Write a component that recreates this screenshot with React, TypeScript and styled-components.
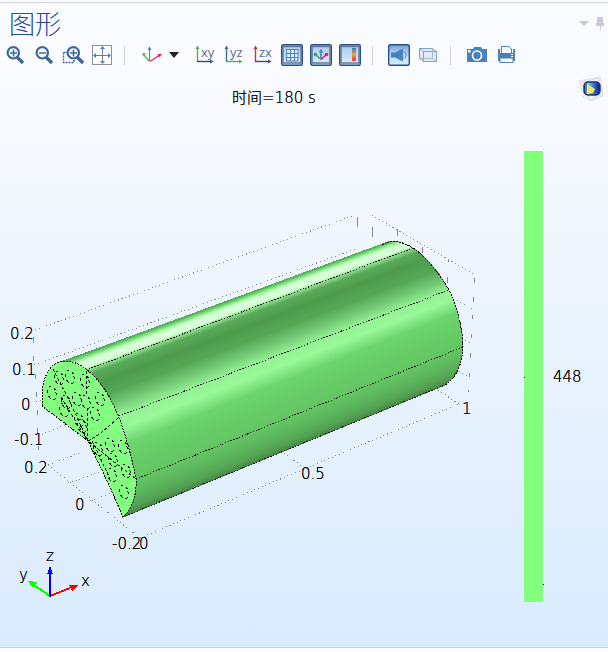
import React from "react";
import styled, { createGlobalStyle, css } from "styled-components";

const GlobalStyle = createGlobalStyle`
  * { box-sizing: border-box; }
  body { margin: 0; background: #fafbff; }
`;

const Page = styled.main`
  display: flex;
  flex-direction: column;
  min-height: 100vh;
  padding: 2px 0 4px;
  background: #fafbff;
  font-family: "DejaVu Sans", "Noto Sans CJK SC", sans-serif;
  color: #111;
`;

const Panel = styled.section`
  flex: 1;
  display: flex;
  flex-direction: column;
  border-top: 1px solid #d0d3dc;
  border-bottom: 1px solid #cdd2da;
`;

const Header = styled.header`
  display: flex;
  justify-content: space-between;
  align-items: center;
  height: 40px;
  padding-left: 9px;
`;

const Title = styled.h1`
  margin: 0;
  font: 100 26px/40px "Noto Sans CJK SC", sans-serif;
  color: #1d4796;
  text-shadow: 0 0 0 #1d4796;
`;

const HeaderActions = styled.div`
  display: flex;
`;

const bareButton = css`
  display: flex;
  align-items: center;
  justify-content: center;
  padding: 0;
  border: 0;
  background: none;
  cursor: pointer;
`;

const HeaderButton = styled.button`
  ${bareButton}
  width: 16px;
  height: 16px;
`;

const Toolbar = styled.div`
  display: flex;
  align-items: center;
  height: 24px;
`;

const ToolButton = styled.button<{ $narrow?: boolean }>`
  ${bareButton}
  flex: none;
  width: ${(p) => (p.$narrow ? 18 : 29)}px;
  height: 24px;
`;

const Divider = styled.span`
  flex: none;
  width: 1px;
  height: 19px;
  margin: 0 11px 0 8px;
  background: #cfd2d9;
`;

const Gap = styled.span`
  width: 7px;
`;

const Plot = styled.div`
  flex: 1;
  display: flex;
  flex-direction: column;
  padding-top: 9px;
  background: linear-gradient(#fafbff, #d9ebfd);
`;

const PlotHeading = styled.div`
  display: grid;
  grid-template-columns: 1fr 60px;
  align-items: center;
  height: 33px;
`;

const TimeLabel = styled.h2`
  margin: 0;
  padding-top: 9px;
  text-align: center;
  font: 200 15px/24px "DejaVu Sans Light", "DejaVu Sans", "Noto Sans CJK SC", sans-serif;
  text-shadow: 0 0 0 #000;
`;

const Logo = styled.div`
  display: flex;
  justify-content: flex-end;
  padding-right: 4px;
  padding-bottom: 8px;
`;

const PlotBody = styled.div`
  flex: 1;
  display: grid;
  grid-template-columns: 1fr 84px;
`;

const Scene = styled.svg`
  display: block;
  width: 100%;
  height: 100%;
`;

const AxisText = styled.text`
  font: 200 15px "DejaVu Sans Light", "DejaVu Sans", sans-serif;
  fill: #000;
  text-shadow: 0 0 0 #000;
`;

const Legend = styled.div`
  display: flex;
  align-items: stretch;
  gap: 10px;
  padding: 42px 0 45px;
`;

const ColorBar = styled.div`
  position: relative;
  width: 19px;
  background: #82ff7e;

  &::before,
  &::after {
    content: "";
    position: absolute;
    width: 1px;
    height: 1px;
    background: #000;
  }
  &::before {
    top: 50%;
    left: 0;
  }
  &::after {
    top: 96%;
    left: 100%;
  }
`;

const LegendValue = styled.span`
  align-self: center;
  font: 200 15px/18px "DejaVu Sans Light", "DejaVu Sans", sans-serif;
  color: #000;
  text-shadow: 0 0 0 #000;
`;

const BLUE = "#4a80bb";
const NAVY = "#3e6797";

const Icon = ({ children, size = 22 }: { children: React.ReactNode; size?: number }) => (
  <svg width={size} height={size} viewBox={`0 0 ${size} ${size}`} fill="none" aria-hidden>
    {children}
  </svg>
);

const Lens = ({ plus, x = 0 }: { plus?: boolean; x?: number }) => (
  <g transform={`translate(${x} 0)`}>
    <path d="M12.5 12.5L19 19" stroke={NAVY} strokeWidth="3.4" />
    <circle cx="9.3" cy="8.8" r="5.7" stroke={NAVY} strokeWidth="2.2" fill="#fafbff" />
    <path d={plus ? "M6 9H13M9.5 5.5V12.5" : "M6 9H13"} stroke={NAVY} strokeWidth="1.5" />
  </g>
);

const ZoomBoxIcon = () => (
  <Icon>
    <path d="M1.5 8.5H9M1.5 8.5V18.5H12V12" stroke={NAVY} strokeWidth="1.3" strokeDasharray="2 1" />
    <Lens plus x={2} />
  </Icon>
);

const ExtentsIcon = () => (
  <Icon>
    <rect x="1.5" y="1.5" width="19" height="19" stroke="#8d9095" fill="#fff" />
    <path d="M11.5 4V18M4 11.5H18" stroke="#777d86" />
    <path d="M9 5L11.5 2L14 5ZM9 17L11.5 20L14 17ZM5 9L2 11.5L5 14ZM17 9L20 11.5L17 14Z" fill={BLUE} />
  </Icon>
);

const AxesIcon = () => (
  <Icon>
    <path d="M9.5 17V5" stroke={BLUE} />
    <path d="M7.5 6L9.5 2.5L11.5 6Z" fill={BLUE} />
    <path d="M9.5 17.5L4 11" stroke="#5cae4c" strokeWidth="1.2" />
    <path d="M2 9L6 9.5L3.5 12.5Z" fill="#5cae4c" />
    <path d="M10 17.5L19 11.5" stroke="#dc2266" strokeWidth="1.2" />
    <path d="M22 10L17.5 10L19.5 13.5Z" fill="#dc2266" />
  </Icon>
);

const PlaneText = styled.text`
  font: 13px "Open Sans", "Noto Sans", sans-serif;
  fill: #5b7089;
`;

const PlaneIcon = ({ label, up, across }: { label: string; up: string; across: string }) => (
  <Icon>
    <path d="M3.5 18V4" stroke={up} strokeWidth="1.4" />
    <path d="M1.5 5L3.5 1.5L5.5 5Z" fill={up} />
    <path d="M3 17.5H17" stroke={across} strokeWidth="1.4" />
    <path d="M16 15.5L19.5 17.5L16 19.5Z" fill={across} />
    <PlaneText x="7" y="13">{label}</PlaneText>
  </Icon>
);

const Pressed = ({ children, framed }: { children: React.ReactNode; framed?: boolean }) => {
  const id = framed ? "pressed-framed" : "pressed";
  return (
    <Icon>
      <defs>
        <linearGradient id={id} x1="0" y1="0" x2="0" y2="1">
          <stop offset="0" stopColor={framed ? "#a9c9ee" : "#6e9dd6"} />
          <stop offset=".5" stopColor="#bfdcf8" />
          <stop offset="1" stopColor="#d3edff" />
        </linearGradient>
      </defs>
      <rect x=".7" y=".7" width="20.6" height="20.6" rx="1.5" fill={`url(#${id})`} stroke="#234f98" strokeWidth="1.4" />
      {framed && <rect x="2" y="2.5" width="18" height="16.5" stroke="#69717c" strokeWidth="1.4" />}
      {children}
    </Icon>
  );
};

const GridIcon = () => (
  <Pressed framed>
    <rect x="5" y="5" width="12" height="12" fill="#dbeeff" />
    <path d="M5.5 5V17M9.5 5V17M13.5 5V17M17 5V17M5 5.500H17M5 9.500H17M5 13.500H17M5 17H17" stroke={BLUE} />
  </Pressed>
);

const AxisToggleIcon = () => (
  <Pressed framed>
    <path d="M11 15V7" stroke={BLUE} strokeWidth="1.6" />
    <path d="M8.5 8.5L11 5L13.5 8.5Z" fill={BLUE} />
    <path d="M11 15.5L6 11" stroke="#35a94b" strokeWidth="1.4" />
    <path d="M11 15.5L16 11" stroke="#dc2266" strokeWidth="1.4" />
    <circle cx="5.5" cy="10.5" r="1.8" fill="#35a94b" />
    <circle cx="16.5" cy="10.5" r="1.8" fill="#dc2266" />
  </Pressed>
);

const LegendIcon = () => (
  <Pressed framed>
    <defs>
      <linearGradient id="legend" x1="0" y1="0" x2="0" y2="1">
        <stop offset="0" stopColor="#3f74b8" />
        <stop offset=".5" stopColor="#eda63b" />
        <stop offset="1" stopColor="#dd3153" />
      </linearGradient>
    </defs>
    <rect x="13" y="4" width="4" height="13" fill="url(#legend)" />
  </Pressed>
);

const LightIcon = () => (
  <Pressed>
    <path d="M3 8.5H7L15 4.500V17.500L7 13.500H3Z" fill={BLUE} />
    <path d="M15.5 7.5C19 8.5 19 13.5 15.5 14.5" stroke={BLUE} />
  </Pressed>
);

const BoxIcon = () => (
  <Icon>
    <path d="M3 4H15L19 7.5V17.5H7L3 13.5Z" fill="#e4eaf1" />
    <path d="M2.5 4.5H15.5L19.5 7.5V17.5H6.5L2.5 14.5ZM2.5 4.5L6.5 7.5H19.5M6.5 7.5V17.5" stroke="#7fa3c9" />
    <path d="M15.5 4.5V14.5H2.5M15.5 14.5L19.5 17.5" stroke="#a5b6c8" />
  </Icon>
);

const CameraIcon = () => (
  <Icon>
    <path d="M1 5H7L8 3H15L16 5H21V18H1Z" fill={BLUE} />
    <circle cx="11" cy="11.5" r="4.5" stroke="#fff" strokeWidth="1.6" />
    <rect x="2" y="6" width="2.5" height="2.5" fill="#fff" />
  </Icon>
);

const PrinterIcon = () => (
  <Icon>
    <path d="M6.5 9.5V2.5H14L16.500 5V9.500" fill="#fff" stroke={BLUE} />
    <path d="M3 5H5V9H18V5H20V17H18V14H5V17H3ZM3 9H20V14H3Z" fill={BLUE} />
    <rect x="5" y="14" width="13" height="4.500" fill="#fff" stroke={BLUE} />
    <path d="M16 10.5H18M16 12.5H18" stroke="#fff" />
  </Icon>
);

const ComsolIcon = () => (
  <Icon size={26}>
    <defs>
      <linearGradient id="flame">
        <stop offset="0" stopColor="#18359c" />
        <stop offset=".25" stopColor="#8fd0c0" />
        <stop offset=".6" stopColor="#2b7fd6" />
        <stop offset="1" stopColor="#0c1a76" />
      </linearGradient>
    </defs>
    <path d="M1 5L22 1L25 20L13 25L5 21Z" fill="#f1f1f1" stroke="#e2e2e1" />
    <path d="M3 7L20 2L25 18L12 24Z" stroke="#dededc" />
    <rect x="6" y="6" width="16" height="13" rx="4" fill="url(#flame)" stroke="#18318d" strokeWidth="1.4" />
    <path d="M9 8L17 13L15 17L9 18Z" fill="#f3e662" />
  </Icon>
);

type Rib = [number, number, number, number, number, number, number];

// Front x/y, back x/y and the surface colour along each generator of the shell.
const ribs: Rib[] = [
  [58, 363, 382, 245, 70, 150, 70],
  [64, 361, 388, 242, 78, 165, 78],
  [68, 361, 394, 241, 88, 185, 88],
  [72, 362, 399, 241, 125, 222, 125],
  [75.5, 363.5, 402.5, 242.5, 185, 252, 185],
  [79, 365, 406, 244, 218, 255, 218],
  [84, 369, 411, 247, 212, 254, 212],
  [86, 370, 413, 248, 150, 228, 150],
  [91, 374, 418, 252, 87, 170, 87],
  [99, 383, 426, 259, 78, 155, 78],
  [107, 394, 436, 270, 85, 167, 85],
  [114, 406, 444, 282, 120, 207, 120],
  [119, 416, 449, 290, 148, 242, 148],
  [123, 427, 453, 299, 152, 249, 152],
  [128, 443, 457, 312, 110, 212, 110],
  [132, 460, 461, 330, 102, 204, 102],
  [136, 479, 463, 347, 99, 197, 99],
  [135, 495, 460, 363, 91, 180, 91],
  [130, 508, 455, 375, 82, 161, 82],
  [123, 517, 445, 385, 70, 135, 70],
];

const STEPS = 8;
const strips = ribs.slice(1).flatMap((to, i) =>
  Array.from({ length: STEPS }, (_, k) => {
    const at = (t: number) => ribs[i].map((v, j) => v + (to[j] - v) * t);
    const a = at(k / STEPS);
    const b = at((k + 1) / STEPS);
    const fill = `rgb(${a.slice(4).map(Math.round).join(",")})`;
    return { fill, points: `${a[0]},${a[1]} ${a[2]},${a[3]} ${b[2]},${b[3]} ${b[0]},${b[1]}` };
  })
);

const FACE =
  "M42 406L42 393C43 381 46 373 52 366C59 360 69 360 78 364C92 371 105 387 114 406C123 425 131 453 136 479C137 495 132 509 123 517L110 487L88 441Z";

const tubes = [
  [59, 378], [70, 377], [85, 381], [52, 393], [77, 399], [100, 399], [86, 402],
  [64, 410], [95, 414], [66, 402], [79, 420], [110, 445], [123, 447], [113, 460],
  [126, 471], [112, 475], [124, 492], [98, 449], [82, 426],
];

const labels: [string, number, number][] = [
  ["0.2", 10, 339], ["0.1", 12, 375], ["0", 21, 410], ["-0.1", 14, 445],
  ["0.2", 24, 473], ["0", 75, 510], ["-0.2", 112, 549], ["0", 139, 549],
  ["0.5", 301, 479], ["1", 462, 414], ["z", 46, 561], ["y", 19, 580], ["x", 81, 586],
];

const GeometryScene = () => (
  <Scene viewBox="0 109 524 538" preserveAspectRatio="xMinYMin meet" role="img" aria-label="时间=180 s, 448">
    <g stroke="#858b93" fill="none" shapeRendering="crispEdges">
      <path
        strokeDasharray="1 3"
        d="M35 330L355 215M34 365L358 248M36 402L43 400M38 436L65 425M48 465L82 452M68 483L100 472M90 501L114 492M48 465L140 538M140 538L459 404M284 453L303 467M372 215L475 275M457 300L473 309M462 338L471 344M459 371L469 377M438 390L459 404"
      />
      <path d="M33 337V343M33 356V361M35 374V379M36 392V397M37 410V415M37 428V433M38 446V450M357 217V227M372 227V237M397 229V236M422 247V253M448 259V262M447 277V283M474 278V283M473 297V302M472 315V319M471 334V338M470 353V358M469 373V377M468 390V392" />
    </g>
    <g shapeRendering="crispEdges">
      {strips.map((s, i) => (
        <polygon key={i} points={s.points} fill={s.fill} stroke={s.fill} />
      ))}
      <path d={FACE} fill="#82ff7e" />
    </g>
    <g stroke="#000" fill="none" shapeRendering="crispEdges">
      <path d={FACE} strokeDasharray="2 1" />
      <path
        strokeDasharray="1.4 1.6"
        d="M86 370L413 248M119 416L449 290M136 479L463 347M123 517L445 385"
      />
      <path strokeDasharray="2 1" d="M382 245C390 240 400 240 413 248C426 256 439 273 449 290C457 306 463 330 463 347C462 364 457 377 445 385" />
      <path strokeDasharray="3 2" d="M53 369L68 398L88 441M86 371V395M87 408L88 441M118 418L100 434L88 441L113 461L136 479M61 397L88 441M92 441L110 478" />
      {tubes.map(([x, y], i) => (
        <ellipse key={i} cx={x} cy={y} rx="4" ry="7" strokeDasharray="3 3" transform={`rotate(-12 ${x} ${y})`} />
      ))}
    </g>
    <g shapeRendering="crispEdges" strokeWidth="2">
      <path d="M50 596L34 585" stroke="#0f0" />
      <path d="M28 581L37 582L33 588Z" fill="#0f0" />
      <path d="M50 596L70 588" stroke="#f00" />
      <path d="M78 585L69 585L72 591Z" fill="#f00" />
      <path d="M50 597V572" stroke="#00f" />
      <path d="M50 566L53 574H47Z" fill="#00f" />
    </g>
    {labels.map(([text, x, y]) => (
      <AxisText key={`${text}${x}`} x={x} y={y}>{text}</AxisText>
    ))}
  </Scene>
);

export default function App() {
  return (
    <>
      <GlobalStyle />
      <Page>
        <Panel>
          <Header>
            <Title>图形</Title>
            <HeaderActions>
              <HeaderButton aria-label="菜单">
                <svg width="10" height="5" viewBox="0 0 10 5"><path d="M0 0H10L5 5Z" fill="#c8ccd7" /></svg>
              </HeaderButton>
              <HeaderButton aria-label="固定">
                <svg width="10" height="13" viewBox="0 0 10 13"><path d="M2 0H8V6H9V9H6V13H5V9H1V6H2Z" fill="#c8ccd7" /></svg>
              </HeaderButton>
            </HeaderActions>
          </Header>
          <Toolbar role="toolbar" aria-label="图形">
            <ToolButton aria-label="放大"><Icon><Lens plus /></Icon></ToolButton>
            <ToolButton aria-label="缩小"><Icon><Lens /></Icon></ToolButton>
            <ToolButton aria-label="框选缩放"><ZoomBoxIcon /></ToolButton>
            <ToolButton aria-label="缩放到窗口"><ExtentsIcon /></ToolButton>
            <Divider />
            <ToolButton aria-label="默认视图"><AxesIcon /></ToolButton>
            <ToolButton $narrow aria-label="更多视图">
              <svg width="10" height="6" viewBox="0 0 10 6"><path d="M0 0H10L5 6Z" fill="#222" /></svg>
            </ToolButton>
            <Gap />
            <ToolButton aria-label="xy"><PlaneIcon label="xy" up="#5cae4c" across="#344f73" /></ToolButton>
            <ToolButton aria-label="yz"><PlaneIcon label="yz" up="#456b9b" across="#5cae4c" /></ToolButton>
            <ToolButton aria-label="zx"><PlaneIcon label="zx" up="#c4353f" across="#344f73" /></ToolButton>
            <ToolButton aria-label="网格" aria-pressed="true"><GridIcon /></ToolButton>
            <ToolButton aria-label="坐标轴" aria-pressed="true"><AxisToggleIcon /></ToolButton>
            <ToolButton aria-label="图例" aria-pressed="true"><LegendIcon /></ToolButton>
            <Divider />
            <ToolButton aria-label="场景光" aria-pressed="true"><LightIcon /></ToolButton>
            <ToolButton aria-label="透明"><BoxIcon /></ToolButton>
            <Divider />
            <ToolButton aria-label="快照"><CameraIcon /></ToolButton>
            <ToolButton aria-label="打印"><PrinterIcon /></ToolButton>
          </Toolbar>
          <Plot>
            <PlotHeading>
              <TimeLabel>时间=180 s</TimeLabel>
              <Logo><ComsolIcon /></Logo>
            </PlotHeading>
            <PlotBody>
              <GeometryScene />
              <Legend>
                <ColorBar />
                <LegendValue>448</LegendValue>
              </Legend>
            </PlotBody>
          </Plot>
        </Panel>
      </Page>
    </>
  );
}
